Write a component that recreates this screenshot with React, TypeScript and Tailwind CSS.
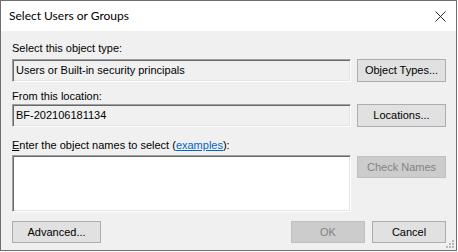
import React from "react";

const ui = { fontFamily: '"Liberation Sans", Arial, sans-serif' };

// Fixed3D style field border used by the read-only boxes and the textarea
const fieldBorder =
  "border border-t-[#a0a0a0] border-l-[#a0a0a0] border-b-white border-r-white shadow-[inset_1px_1px_0_#696969,inset_-1px_-1px_0_#e3e3e3]";

const Btn: React.FC<{ label: string; width: string; disabled?: boolean; height?: string }> = ({
  label,
  width,
  disabled,
  height = "h-[22px]",
}) => (
  <div
    className={`${width} ${height} flex items-center justify-center border text-[11px] ${
      disabled ? "bg-[#cccccc] border-[#bfbfbf] text-[#838383]" : "bg-[#e1e1e1] border-[#adadad] text-black"
    }`}
  >
    {label}
  </div>
);

const ReadOnlyRow: React.FC<{ value: string; button: string }> = ({ value, button }) => (
  <div className="flex items-start gap-[6px]">
    <div className={`w-[339px] h-[23px] bg-[#f0f0f0] ${fieldBorder} flex items-center pl-[3px] text-[11px] text-black`}>
      {value}
    </div>
    <Btn label={button} width="w-[89px]" height="h-[23px]" />
  </div>
);

const App: React.FC = () => {
  return (
    <div className="w-[458px] h-[252px] bg-white" style={ui}>
      <div className="relative w-[457px] h-[251px] border border-[#6f6f6f] bg-[#f0f0f0] flex flex-col">
        {/* Title bar */}
        <div className="h-[30px] bg-white flex items-center justify-between pl-[8px] pr-[9px] shrink-0">
          <span className="text-[12px] text-black" style={{ fontFamily: 'Lato, "Noto Sans", sans-serif' }}>
            Select Users or Groups
          </span>
          <svg width="11" height="11" viewBox="0 0 11 11" className="mr-[1px]">
            <path d="M0.5 0.5 L10.5 10.5 M10.5 0.5 L0.5 10.5" stroke="#111" strokeWidth="0.9" />
          </svg>
        </div>

        {/* Body */}
        <div className="flex flex-col pl-[11px] pt-[10px]">
          <div className="h-[14px] leading-[14px] text-[11px] text-black">Select this object type:</div>
          <div className="mt-[4px]">
            <ReadOnlyRow value="Users or Built-in security principals" button="Object Types..." />
          </div>

          <div className="mt-[7px] h-[14px] leading-[14px] text-[11px] text-black">From this location:</div>
          <div className="mt-[1px]">
            <ReadOnlyRow value="BF-202106181134" button="Locations..." />
          </div>

          <div className="mt-[11px] h-[14px] leading-[14px] text-[11px] text-black">
            <span className="underline">E</span>nter the object names to select (
            <span className="text-[#0066cc] underline">examples</span>):
          </div>
          <div className="mt-[3px] flex items-start gap-[6px]">
            <div className={`w-[339px] h-[57px] bg-white ${fieldBorder}`} />
            <div className="mt-[1px]">
              <Btn label="Check Names" width="w-[89px]" disabled />
            </div>
          </div>

          <div className="mt-[9px] flex items-center pr-[10px]">
            <Btn label="Advanced..." width="w-[89px]" />
            <div className="ml-auto flex gap-[7px]">
              <Btn label="OK" width="w-[74px]" disabled />
              <Btn label="Cancel" width="w-[74px]" />
            </div>
          </div>
        </div>

        {/* Size grip */}
        <svg width="9" height="9" viewBox="0 0 9 9" className="absolute right-[1px] bottom-[1px]">
          <rect x="6" y="0" width="2" height="2" fill="#b8b8b8" />
          <rect x="3" y="3" width="2" height="2" fill="#b8b8b8" />
          <rect x="6" y="3" width="2" height="2" fill="#b8b8b8" />
          <rect x="0" y="6" width="2" height="2" fill="#b8b8b8" />
          <rect x="3" y="6" width="2" height="2" fill="#b8b8b8" />
          <rect x="6" y="6" width="2" height="2" fill="#b8b8b8" />
        </svg>
      </div>
    </div>
  );
};

export default App;
